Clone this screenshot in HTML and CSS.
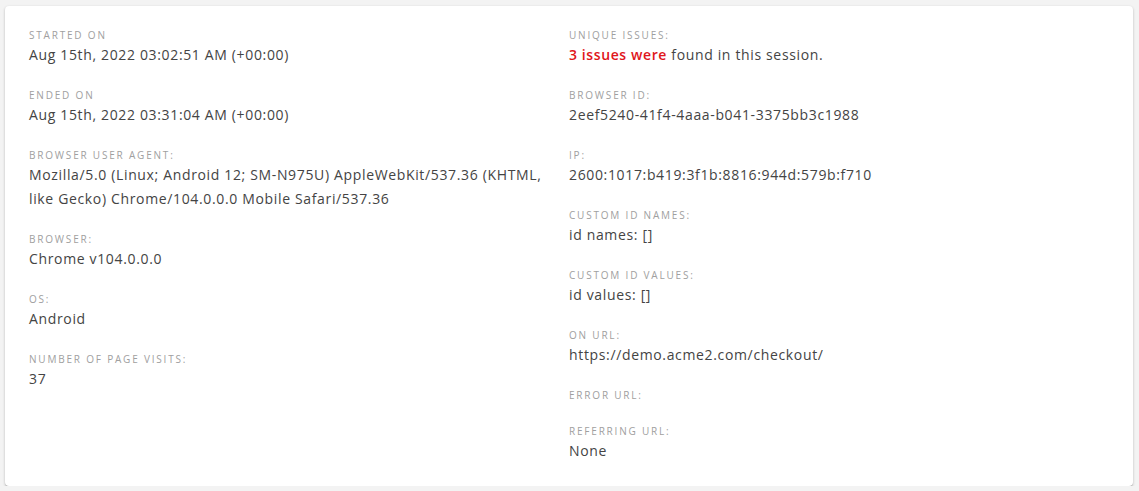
FILE: index.html
```html
<!DOCTYPE html>
<html lang="en">
<head>
<meta charset="utf-8">
<title>Session details</title>
<link rel="stylesheet" href="styles.css">
</head>
<body>
<div class="card">
  <div class="col">
    <div class="item"><div class="label">Started on</div><div class="value">Aug 15th, 2022 03:02:51 AM (+00:00)</div></div>
    <div class="item"><div class="label">Ended on</div><div class="value">Aug 15th, 2022 03:31:04 AM (+00:00)</div></div>
    <div class="item"><div class="label">Browser user agent:</div><div class="value">Mozilla/5.0 (Linux; Android 12; SM-N975U) AppleWebKit/537.36 (KHTML, like Gecko) Chrome/104.0.0.0 Mobile Safari/537.36</div></div>
    <div class="item"><div class="label">Browser:</div><div class="value">Chrome v104.0.0.0</div></div>
    <div class="item"><div class="label">OS:</div><div class="value">Android</div></div>
    <div class="item"><div class="label">Number of page visits:</div><div class="value">37</div></div>
  </div>
  <div class="col">
    <div class="item"><div class="label">Unique issues:</div><div class="value"><span class="issues">3 issues were</span> found in this session.</div></div>
    <div class="item"><div class="label">Browser ID:</div><div class="value">2eef5240-41f4-4aaa-b041-3375bb3c1988</div></div>
    <div class="item"><div class="label">IP:</div><div class="value">2600:1017:b419:3f1b:8816:944d:579b:f710</div></div>
    <div class="item"><div class="label">Custom ID names:</div><div class="value">id names: []</div></div>
    <div class="item"><div class="label">Custom ID values:</div><div class="value">id values: []</div></div>
    <div class="item"><div class="label">On URL:</div><div class="value">https://demo.acme2.com/checkout/</div></div>
    <div class="item"><div class="label">Error URL:</div><div class="value"></div></div>
    <div class="item"><div class="label">Referring URL:</div><div class="value">None</div></div>
  </div>
</div>
</body>
</html>
```
FILE: styles.css
```css
html, body {
  margin: 0;
  background: #f3f3f3;
}
body {
  padding: 6px 6px 0 5px;
  font-family: "Open Sans", Lato, "Liberation Sans", sans-serif;
}
.card {
  background: #fff;
  border-radius: 4px;
  box-shadow: 0 1px 3px rgba(0,0,0,0.2), 0 1px 1px rgba(0,0,0,0.14), 0 2px 1px -1px rgba(0,0,0,0.12);
  padding: 21px 24px 23px;
  display: grid;
  grid-template-columns: 1fr 1fr;
}
.col {
  display: flex;
  flex-direction: column;
  gap: 20px;
}
.label {
  font-size: 10px;
  line-height: 16px;
  letter-spacing: 1.8px;
  text-transform: uppercase;
  color: #a0a0a0;
}
.value {
  font-size: 14px;
  line-height: 24px;
  letter-spacing: 0.65px;
  color: #444;
}
.value:empty { display: none; }
.issues {
  color: #e0161b;
  font-weight: 600;
  letter-spacing: 0.6px;
}
```
